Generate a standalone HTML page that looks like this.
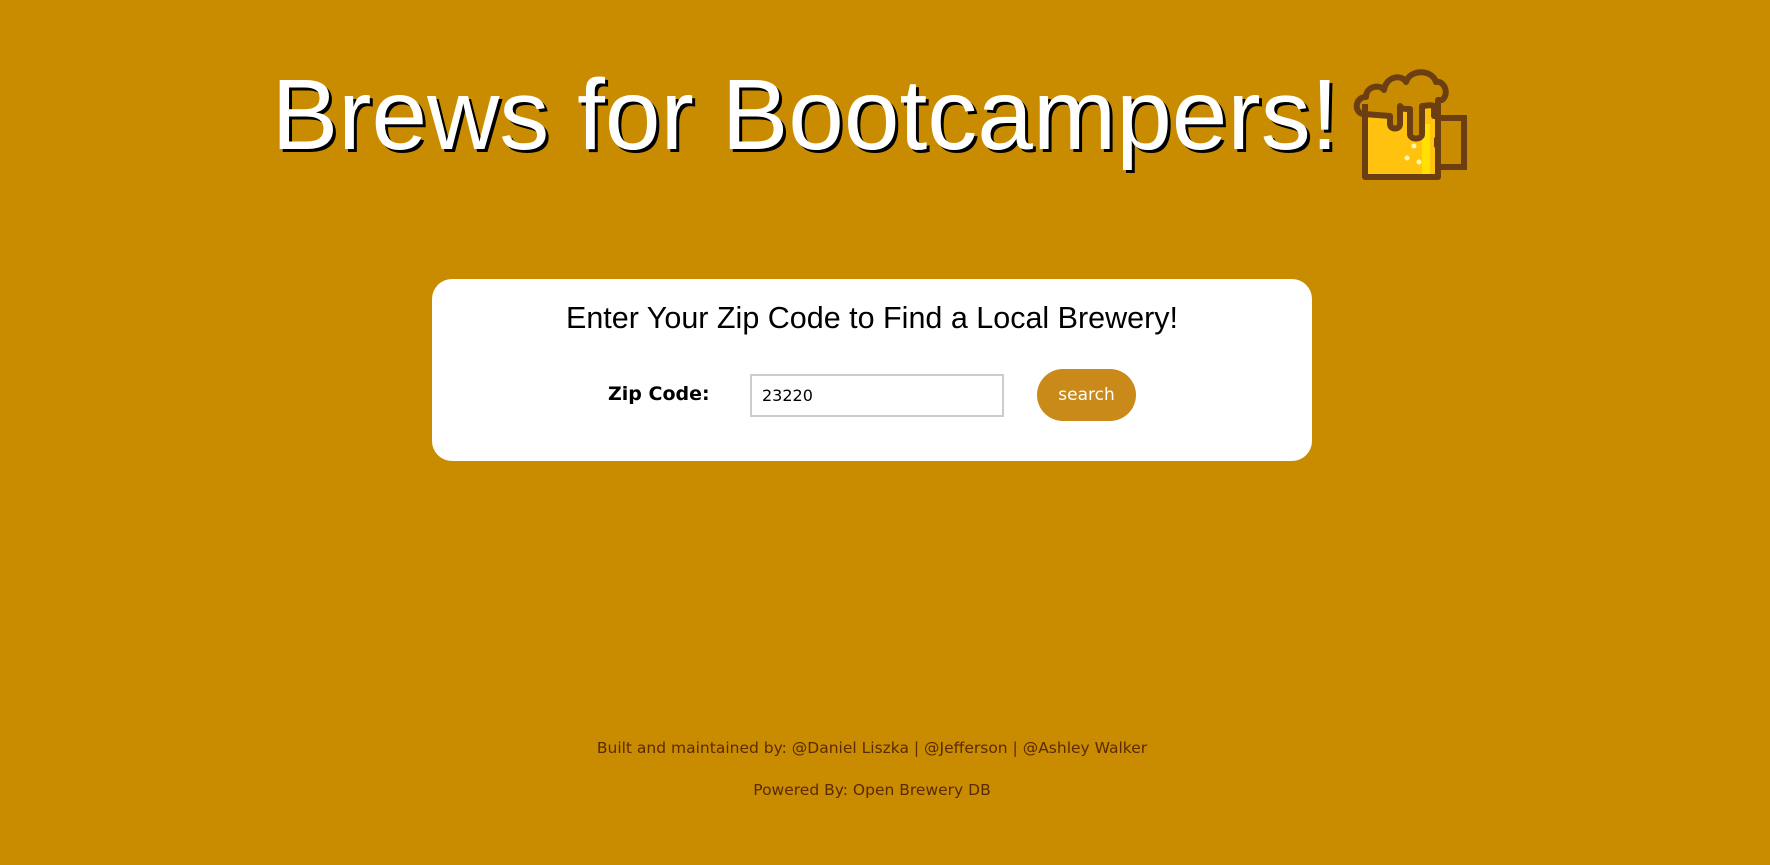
<!DOCTYPE html>
<html><head><meta charset="utf-8"><style>
html,body{margin:0;padding:0;width:1770px;height:865px;background:#c98c00;overflow:hidden;position:relative;font-family:"DejaVu Sans",Verdana,sans-serif}
.t{position:absolute;left:0;top:55px;width:1610px;text-align:center;font-family:"Liberation Sans",Arial,sans-serif;font-size:100px;color:#fff;text-shadow:3px 3px 0 #000;line-height:120px;white-space:nowrap}
.icon{position:absolute;left:1352px;top:64px}
.card{position:absolute;left:432px;top:279px;width:880px;height:182px;background:#fff;border-radius:20px}
.h{position:absolute;left:0;width:880px;top:22px;text-align:center;font-family:"Liberation Sans",Arial,sans-serif;font-size:30.5px;color:#000}
.lbl{position:absolute;left:176px;top:104px;font-weight:bold;font-size:19px;color:#000}
.inp{position:absolute;left:318px;top:95px;width:254px;height:43px;border:2px solid #ccc;box-sizing:border-box;font-size:16px;line-height:39px;padding-left:10px;color:#000}
.btn{position:absolute;left:605px;top:90px;width:99px;height:52px;border-radius:26px;background:#c98a1a;color:#fff;font-size:17px;text-align:center;line-height:52px}
.f{position:absolute;left:0;width:1744px;text-align:center;font-size:15.5px;color:#5a2a00}
</style></head><body>
<div class="t">Brews for Bootcampers!</div>
<svg class="icon" width="120" height="116" viewBox="0 0 120 116">
<path d="M13 40 H86 V113 H13 Z" fill="#ffc20e"/>
<rect x="70" y="60" width="8" height="52" fill="#ffe000"/>
<path d="M12 50 C2 50 2 33 14 33 C14 22 28 20 32 26 C34 12 50 10 54 18 C58 5 80 5 84 18 C92 16 98 30 90 36 L86 36 V52 H82 V42 C78 40 74 42 70 42 V70 C70 76 58 76 58 70 V45 C52 45 50 45 48 42 V60 C48 66 38 66 38 60 V52 Z" fill="#c98c00" stroke="#6b3f12" stroke-width="6" stroke-linejoin="round"/>
<path d="M13 40 V113 H86 V38" fill="none" stroke="#6b3f12" stroke-width="6" stroke-linejoin="round"/>
<path d="M86 54 H112 V103 H86" fill="none" stroke="#6b3f12" stroke-width="6"/>
<circle cx="62" cy="82" r="2.5" fill="#fff6b0"/><circle cx="55" cy="94" r="2.5" fill="#fff6b0"/><circle cx="67" cy="98" r="2.5" fill="#fff6b0"/>
<rect x="82" y="73" width="5" height="11" rx="2" fill="#6b3f12"/>
</svg>
<div class="card">
<div class="h">Enter Your Zip Code to Find a Local Brewery!</div>
<div class="lbl">Zip Code:</div>
<div class="inp">23220</div>
<div class="btn">search</div>
</div>
<div class="f" style="top:739px">Built and maintained by: @Daniel Liszka | @Jefferson | @Ashley Walker</div>
<div class="f" style="top:781px">Powered By: Open Brewery DB</div>
</body></html>
